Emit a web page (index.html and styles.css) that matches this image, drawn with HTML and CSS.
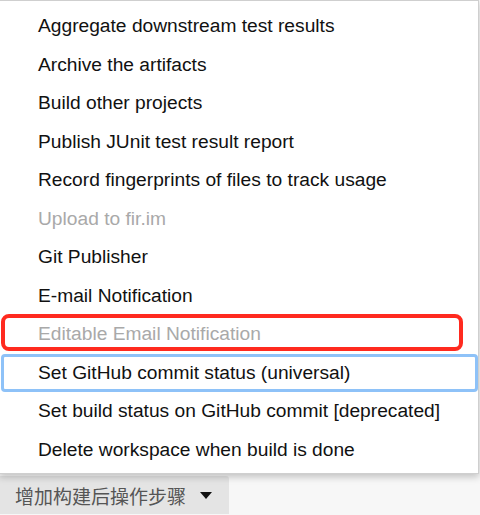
FILE: index.html
```html
<!DOCTYPE html>
<html lang="en">
<head>
  <meta charset="UTF-8" />
  <title>Post-build actions</title>
  <link rel="stylesheet" href="styles.css">
</head>
<body>
  <ul class="menu">
    <li>Aggregate downstream test results</li>
    <li>Archive the artifacts</li>
    <li>Build other projects</li>
    <li>Publish JUnit test result report</li>
    <li>Record fingerprints of files to track usage</li>
    <li class="disabled">Upload to fir.im</li>
    <li>Git Publisher</li>
    <li>E-mail Notification</li>
    <li class="disabled marked">Editable Email Notification</li>
    <li class="focused">Set GitHub commit status (universal)</li>
    <li>Set build status on GitHub commit [deprecated]</li>
    <li>Delete workspace when build is done</li>
  </ul>

  <button class="add-btn">增加构建后操作步骤 <span class="caret"></span></button>
</body>
</html>
```

FILE: styles.css
```css
body {
  margin: 0;
  background: #f7f7f7;
  font-family: 'Liberation Sans', Arial, sans-serif;
  overflow: hidden;
}
.menu {
  list-style: none;
  margin: 0 0 0 -1px;
  padding: 6px 0 4px;
  width: 478px;
  background: #fff;
  border: 1px solid #cfcfcf;
  box-shadow: 0 3px 7px rgba(0,0,0,0.22);
  position: relative;
  z-index: 1;
}
.menu li {
  box-sizing: border-box;
  position: relative;
  height: 38.5px;
  line-height: 38.5px;
  padding-left: 38px;
  font-size: 19.2px;
  color: #111;
}
.menu li.disabled {
  color: #a9a9a9;
}
.menu li.focused {
  margin-left: 1px;
  padding-left: 34px;
  line-height: 32.5px;
  border: 3px solid #8ec2f8;
  border-radius: 4px;
}
.menu li.marked::after {
  content: "";
  position: absolute;
  left: 1px;
  top: -1px;
  width: 454px;
  height: 29px;
  border: 4px solid #ff2a1f;
  border-radius: 8px;
}
.add-btn {
  display: flex;
  align-items: center;
  gap: 14px;
  margin-top: 2px;
  height: 38px;
  width: 229px;
  padding: 0 0 0 15px;
  border: none;
  border-radius: 0 3px 0 0;
  background: #e4e4e4;
  color: #555;
  font-size: 19px;
  font-family: 'Liberation Sans', 'Noto Sans CJK SC', sans-serif;
}
.caret {
  width: 0;
  height: 0;
  border-left: 6px solid transparent;
  border-right: 6px solid transparent;
  border-top: 7px solid #111;
}
```
